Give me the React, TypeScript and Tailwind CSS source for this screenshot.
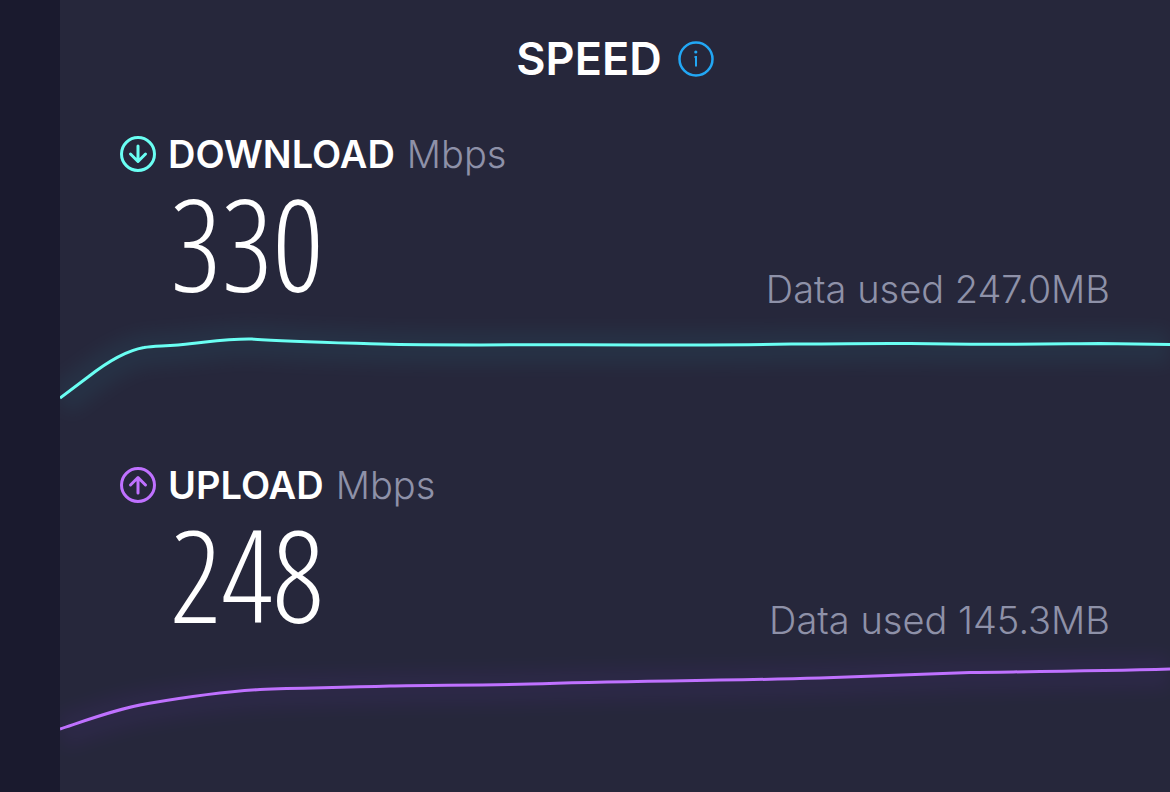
import React from "react";

type Speed = {
  id: string;
  label: string;
  value: number;
  dataUsed: string;
  color: string;
  glow: string;
  arrow: string;
  line: string;
};

const speeds: Speed[] = [
  {
    id: "download",
    label: "DOWNLOAD",
    value: 330,
    dataUsed: "247.0MB",
    color: "#6afff3",
    glow: "#2fd0e0",
    arrow: "M18 10V25M10.5 18L18 25.5L25.5 18",
    line: "M0 86L28 65C42 54 64 39 84 35.5C94 33.5 108 34.5 132 31.5C155 29 172 26.5 192 27C225 29.5 270 30.5 320 32C400 34 470 32 600 33C700 33 780 31 850 31.5C930 33 980 32 1040 31.5L1110 32.5",
  },
  {
    id: "upload",
    label: "UPLOAD",
    value: 248,
    dataUsed: "145.3MB",
    color: "#bf71ff",
    glow: "#8f3dff",
    arrow: "M18 26V11M10.5 18L18 10.5L25.5 18",
    line: "M0 86C30 76 60 65 88 60.5C120 55 165 48.5 200 46.5C240 44.5 270 45 330 43C370 42 420 42.5 470 41C560 37.5 640 38.5 760 35C810 33.5 860 31 910 29.5C980 28.5 1040 28 1110 26",
  },
];

function SpeedChart({ speed }: { speed: Speed }) {
  return (
    <svg
      viewBox="0 0 1110 139"
      preserveAspectRatio="none"
      className="block w-full h-[139px] overflow-visible"
      aria-hidden="true"
    >
      <defs>
        <filter id={`${speed.id}-glow`} x="-5%" y="-100%" width="110%" height="300%">
          <feGaussianBlur stdDeviation="9" />
        </filter>
      </defs>
      <path
        d={speed.line}
        fill="none"
        stroke={speed.glow}
        strokeWidth="34"
        opacity="0.06"
        filter={`url(#${speed.id}-glow)`}
        transform="translate(0 3)"
      />
      <path d={speed.line} fill="none" stroke={speed.color} strokeWidth="3" />
    </svg>
  );
}

function SpeedResult({ speed }: { speed: Speed }) {
  return (
    <section>
      <div className="px-[60px] pt-4">
        <h2 className="flex items-center h-9 text-[38px] leading-9 whitespace-nowrap">
          <svg width="36" height="36" viewBox="0 0 36 36" fill="none" stroke={speed.color} strokeWidth="3" aria-hidden="true">
            <circle cx="18" cy="18" r="16.5" />
            <path d={speed.arrow} strokeLinecap="round" strokeLinejoin="round" />
          </svg>
          <span className="ml-3 font-semibold text-white">{speed.label}</span>
          <span className="ml-3 font-light text-[#8e91a8]">Mbps</span>
        </h2>
        <div className="flex items-end justify-between h-[140px]">
          <p className="pl-[50px] font-['Open_Sans_Condensed_Light','Open_Sans_Condensed','Liberation_Sans_Narrow',sans-serif] text-[128px] leading-[138px] font-extralight text-white">
            {speed.value}
          </p>
          <p className="pb-1 text-[38px] leading-[38px] font-light text-[#8e91a8] whitespace-nowrap">Data used {speed.dataUsed}</p>
        </div>
      </div>
      <SpeedChart speed={speed} />
    </section>
  );
}

export default function App() {
  return (
    <div className="flex min-h-screen bg-[#1a1a2e] font-[Inter,sans-serif]">
      <main className="flex-1 min-w-0 ml-[60px] bg-[#26273b] overflow-hidden">
        <header className="flex items-center justify-center gap-4 h-[118px] mb-0.5">
          <h1 className="text-[45px] leading-[48px] font-semibold text-white">SPEED</h1>
          <button type="button" aria-label="About speed" className="cursor-pointer">
            <svg width="36" height="36" viewBox="0 0 36 36" fill="none" stroke="#22a7f5" strokeWidth="2.5" aria-hidden="true">
              <circle cx="18" cy="18" r="16.5" />
              <path d="M16.5 16H18V25.5" strokeWidth="2" />
              <circle cx="17.8" cy="11" r="1.6" fill="#22a7f5" stroke="none" />
            </svg>
          </button>
        </header>
        {speeds.map((speed) => (
          <SpeedResult key={speed.id} speed={speed} />
        ))}
      </main>
    </div>
  );
}
